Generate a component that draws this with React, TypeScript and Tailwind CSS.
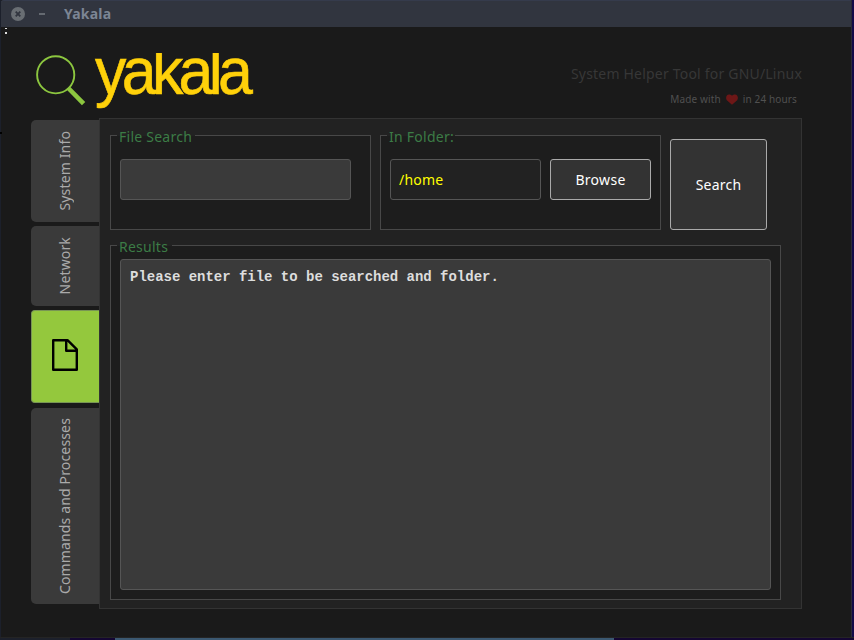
import type { ReactNode } from "react";

function Group({ title, legend, className, children }: { title: string; legend: string; className: string; children?: ReactNode }) {
  return (
    <section className={`relative border border-[#484848] bg-[#1d1d1d] ${className}`}>
      <h2 className={`absolute left-[6px] -top-px h-px bg-[#222222] ${legend}`}>
        <span className="absolute left-[2px] -top-[9px] whitespace-nowrap text-[14px] leading-[22px] tracking-[0.25px] text-[#3c7c46]">{title}</span>
      </h2>
      {children}
    </section>
  );
}

function Tab({ label, className }: { label: string; className: string }) {
  return (
    <button className={`flex w-[68px] items-center justify-center rounded-l-[5px] bg-[#3a3a3a] text-[#aaaaaa] ${className}`}>
      <span className="rotate-180 whitespace-nowrap text-[14px] leading-[20px] tracking-[0.15px] [writing-mode:vertical-rl]">{label}</span>
    </button>
  );
}

export default function App() {
  return (
    <div className="relative flex h-[640px] w-[854px] flex-col overflow-hidden bg-[#1a1a1a] font-['Noto_Sans',sans-serif]">
      <header className="flex h-[27px] items-center rounded-t-[4px] border-t border-[#353b4c] bg-[#31353f] pl-[11px]">
        <svg width="14" height="14" viewBox="0 0 14 14" aria-hidden="true">
          <circle cx="7" cy="7" r="7" fill="#696e73" />
          <path d="M4.7 4.7l4.6 4.6M9.3 4.7L4.7 9.3" stroke="#31353f" strokeWidth="1.8" />
        </svg>
        <span className="ml-[14px] h-[2px] w-[6px] bg-[#656a71]" />
        <span className="ml-[19px] text-[14px] font-bold leading-[20px] tracking-[0.2px] text-[#7c8594]">Yakala</span>
      </header>

      <div className="flex h-[91px] justify-between pl-[34px] pr-[52px]">
        <div className="flex">
          <svg className="mt-[26px]" width="54" height="54" viewBox="0 0 54 54" fill="none" stroke="#8cc63f" aria-hidden="true">
            <circle cx="21.7" cy="21.8" r="18.6" strokeWidth="1.9" />
            <path d="M34.2 35L49.6 50.6" strokeWidth="4.6" />
          </svg>
          <div className="mt-[26px] h-[58px] w-[172px] overflow-hidden pl-[7px]">
            <h1 className="-mt-[20px] origin-left scale-x-[0.95] whitespace-nowrap font-['Liberation_Sans',sans-serif] text-[66px] leading-[76px] tracking-[-4.9px] text-[#ffd10a] [-webkit-text-stroke:0.6px_#ffd10a]">yakala</h1>
          </div>
        </div>
        <div className="flex flex-col items-end">
          <p className="mt-[36px] whitespace-nowrap text-[14px] leading-[22px] tracking-[0.2px] text-[#373737]">System Helper Tool for GNU/Linux</p>
          <p className="mr-[5px] mt-[6px] flex items-center whitespace-nowrap text-[10px] leading-[16px] tracking-[0.13px] text-[#505050]">
            <span>Made with</span>
            <svg className="mx-[5px]" width="12" height="11" viewBox="0 0 12 11" fill="#6d1717" aria-hidden="true">
              <path d="M6 10.7L.8 6.200C-.7 3.900.3.4 3 .4 4.500.4 5.500 1 6 1.800 6.500 1 7.500.4 9 .4c2.700 0 3.700 3.500 2.200 5.800z" />
            </svg>
            <span>in 24 hours</span>
          </p>
        </div>
      </div>

      <main className="flex h-[491px] pl-[31px]">
        <nav className="flex flex-col gap-[4px] pt-[2px]">
          <Tab label="System Info" className="h-[102px]" />
          <Tab label="Network" className="h-[80px]" />
          <button aria-label="Files" className="mb-px flex h-[93px] w-[68px] items-center justify-center rounded-l-[4px] border border-r-0 border-[#789554] bg-[#94c83d] pr-[2px]">
            <svg className="-mt-[3px]" width="26" height="32" viewBox="0 0 26 32" fill="none" stroke="#000000" strokeWidth="2.4" strokeLinejoin="round" aria-hidden="true">
              <path d="M1.200 1.200H15.500L24.800 10.300V30.800H1.200Z M14.200 1.200V11.800H24.800" />
            </svg>
          </button>
          <Tab label="Commands and Processes" className="h-[196px]" />
        </nav>

        <div className="flex w-[703px] flex-col gap-[15px] border border-[#333333] bg-[#222222] pl-[10px] pt-[16px]">
          <div className="flex gap-[9px]">
            <Group title="File Search" legend="w-[78px]" className="h-[95px] w-[261px] px-[9px] pt-[23px]">
              <div className="h-[41px] w-[231px] rounded-[3px] border border-[#555555] bg-[#3a3a3a]" />
            </Group>
            <Group title="In Folder:" legend="w-[68px]" className="flex h-[95px] w-[281px] gap-[9px] px-[9px] pt-[23px]">
              <div className="flex h-[41px] w-[151px] items-center rounded-[3px] border border-[#555555] bg-[#222222] pl-[8px] text-[14px] tracking-[0.2px] text-[#ffff00]">/home</div>
              <button className="h-[41px] w-[101px] rounded-[3px] border border-[#aaaaaa] bg-[#333333] text-[14px] tracking-[0.3px] text-white">Browse</button>
            </Group>
            <button className="mt-[4px] h-[91px] w-[97px] rounded-[3px] border border-[#aaaaaa] bg-[#333333] text-[14px] tracking-[0.2px] text-white">Search</button>
          </div>
          <Group title="Results" legend="w-[55px]" className="h-[355px] w-[671px] px-[9px] pt-[13px]">
            <div className="h-[331px] w-[651px] rounded-[3px] border border-[#555555] bg-[#3a3a3a] pl-[9px] pt-[8px] font-['Liberation_Mono',monospace] text-[14px] font-bold leading-[18px] tracking-[-0.02px] text-[#dddddd]">
              Please enter file to be searched and folder.
            </div>
          </Group>
        </div>
      </main>

      <div className="absolute left-[5px] top-[28px] flex flex-col gap-[3px]">
        <span className="h-px w-[2px] bg-[#dddddd]" />
        <span className="h-[2px] w-[2px] bg-[#dddddd]" />
      </div>
      <div className="absolute left-0 top-0 h-full w-px bg-[#1c202b]" />
      <div className="absolute left-0 top-[132px] h-[2px] w-[2px] bg-black" />
      <div className="absolute right-0 top-0 h-full w-[3px] border-l border-[#292936] bg-[#120a48]" />
      <div className="absolute bottom-0 left-0 flex h-[3px] w-full border-t border-[#242424] bg-[#140632]">
        <div className="w-[70px] bg-[#1c202b]" />
        <div className="ml-[45px] w-[499px] bg-[#3b5871]" />
      </div>
    </div>
  );
}
